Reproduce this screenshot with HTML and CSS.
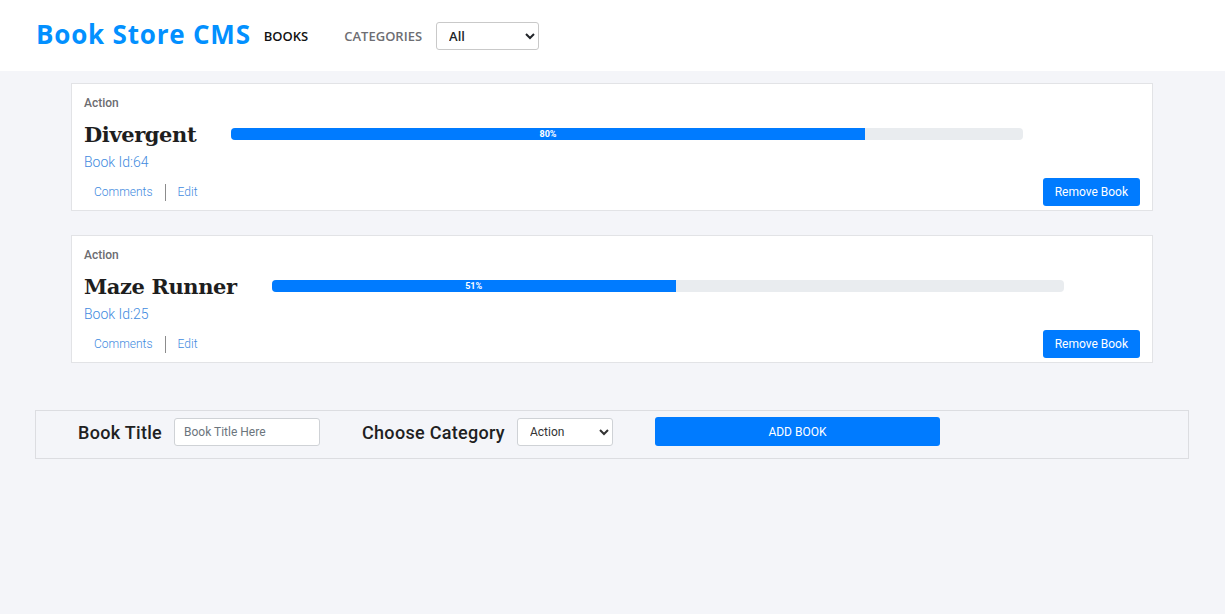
FILE: index.html
```html
<!DOCTYPE html>
<html lang="en">
<head>
<meta charset="utf-8">
<title>Book Store CMS</title>
<link rel="stylesheet" href="styles.css">
</head>
<body>
<header class="header">
  <h1 class="logo">Book Store CMS</h1>
  <nav class="nav">
    <a class="nav-link active" href="#">BOOKS</a>
    <span class="nav-link muted">CATEGORIES</span>
    <select class="filter">
      <option>All</option>
    </select>
  </nav>
</header>
<main class="books">
  <article class="card">
    <div class="category">Action</div>
    <div class="title-row">
      <h2 class="title">Divergent</h2>
      <div class="progress"><div class="bar" style="width:80%">80%</div></div>
    </div>
    <div class="book-id">Book Id:64</div>
    <div class="actions">
      <div class="links">
        <a href="#" class="link">Comments</a>
        <span class="sep"></span>
        <a href="#" class="link">Edit</a>
      </div>
      <button class="remove">Remove Book</button>
    </div>
  </article>
  <article class="card">
    <div class="category">Action</div>
    <div class="title-row">
      <h2 class="title">Maze Runner</h2>
      <div class="progress"><div class="bar" style="width:51%">51%</div></div>
    </div>
    <div class="book-id">Book Id:25</div>
    <div class="actions">
      <div class="links">
        <a href="#" class="link">Comments</a>
        <span class="sep"></span>
        <a href="#" class="link">Edit</a>
      </div>
      <button class="remove">Remove Book</button>
    </div>
  </article>
</main>
<form class="add-form">
  <label class="form-label">Book Title</label>
  <input class="title-input" type="text" placeholder="Book Title Here">
  <label class="form-label cat-label">Choose Category</label>
  <select class="cat-select"><option>Action</option></select>
  <button type="button" class="add-btn">ADD BOOK</button>
</form>
</body>
</html>
```
FILE: styles.css
```css
* { box-sizing: border-box; }
html, body { margin: 0; padding: 0; }
body {
  background: #f4f5f9;
  font-family: Roboto, "Liberation Sans", sans-serif;
  color: #212529;
  height: 614px;
}
.header {
  background: #fff;
  height: 71px;
  display: flex;
  align-items: center;
  padding-left: 36px;
}
.logo {
  margin: 0;
  font-family: "Open Sans", sans-serif;
  font-weight: 700;
  font-size: 26px;
  color: #0290ff;
  letter-spacing: 0.8px;
  margin-top: -3px;
}
.nav {
  display: flex;
  align-items: center;
  margin-left: 13px;
}
.nav-link {
  font-family: "Open Sans", sans-serif;
  font-size: 13px;
  font-weight: 600;
  text-decoration: none;
  color: #121212;
}
.nav-link.muted {
  color: #6e6e73;
  margin-left: 36px;
}
.filter {
  margin-left: 14px;
  width: 103px;
  height: 28px;
  font-family: "Open Sans", sans-serif;
  font-size: 13px;
  font-weight: 600;
  padding: 0 8px;
  border: 1px solid #c9c9c9;
  border-radius: 3px;
  background: #fff;
  color: #212529;
}
.books {
  margin: 12px 72px 0 71px;
  display: flex;
  flex-direction: column;
  gap: 24px;
}
.card {
  background: #fff;
  border: 1px solid #e2e3e6;
  padding: 10px 12px 4px 12px;
}
.category {
  font-size: 12px;
  font-weight: 500;
  color: #6c6c70;
  line-height: 18px;
}
.title-row {
  display: flex;
  align-items: center;
  margin-top: 7px;
  height: 30px;
}
.title {
  margin: 0;
  font-family: "DejaVu Serif", serif;
  font-weight: 700;
  font-size: 21px;
  color: #1e1e1e;
  letter-spacing: -0.4px;
}
.progress {
  margin-left: 35px;
  width: 792px;
  height: 12px;
  background: #e9ecef;
  border-radius: 4px;
  overflow: hidden;
  display: flex;
}
.bar {
  background: #007bff;
  color: #fff;
  font-size: 9px;
  font-weight: 700;
  line-height: 12px;
  text-align: center;
}
.book-id {
  font-size: 14px;
  font-weight: 300;
  color: #3f8be0;
  line-height: 20px;
  margin-top: 3px;
}
.actions {
  display: flex;
  align-items: center;
  justify-content: space-between;
  margin-top: 6px;
}
.links {
  display: flex;
  align-items: center;
  padding-left: 10px;
}
.link {
  font-size: 12px;
  font-weight: 300;
  color: #3f8be0;
  text-decoration: none;
}
.sep {
  width: 1px;
  height: 17px;
  background: #8c8c8c;
  margin: 0 12px;
}
.remove {
  font-family: Roboto, sans-serif;
  font-size: 12px;
  background: #007bff;
  color: #fff;
  border: none;
  border-radius: 3px;
  height: 28px;
  padding: 0 12px;
}
.add-form {
  margin: 47px 36px 0 35px;
  border: 1px solid #dcdde1;
  height: 49px;
  display: flex;
  align-items: center;
  padding: 0 0 5px 42px;
}
.form-label {
  font-size: 18px;
  font-weight: 500;
  color: #212121;
  letter-spacing: 0.3px;
}
.title-input {
  margin-left: 12px;
  width: 146px;
  height: 28px;
  border: 1px solid #cfd2d6;
  border-radius: 3px;
  padding: 0 9px;
  font-family: Roboto, sans-serif;
  font-size: 12px;
}
.title-input::placeholder { color: #6c757d; }
.cat-label { margin-left: 42px; }
.cat-select {
  margin-left: 12px;
  width: 96px;
  height: 28px;
  border: 1px solid #cfd2d6;
  border-radius: 3px;
  background: #fff;
  font-family: Roboto, sans-serif;
  font-size: 12px;
  padding: 0 8px;
  color: #333;
}
.add-btn {
  margin-left: 42px;
  width: 285px;
  height: 29px;
  background: #007bff;
  border: none;
  border-radius: 3px;
  color: #fff;
  font-family: Roboto, sans-serif;
  font-size: 12px;
  margin-top: -1px;
}
```
